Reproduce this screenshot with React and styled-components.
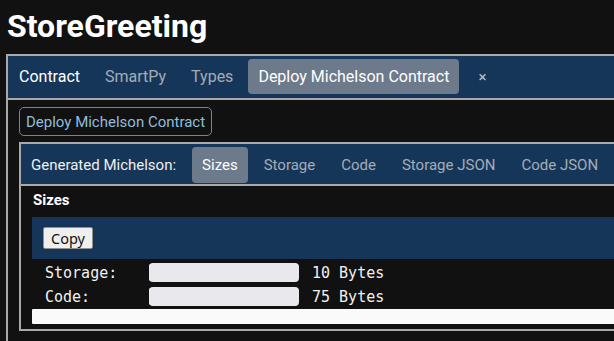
import React from 'react';
import styled, { createGlobalStyle } from 'styled-components';

const GlobalStyle = createGlobalStyle`
  html, body {
    margin: 0;
    background: #111111;
    overflow: hidden;
  }
  body {
    font-family: Roboto, "Liberation Sans", sans-serif;
    color: #ffffff;
  }
`;

const Page = styled.div`
  padding: 6px 0 0 6px;
`;

const Title = styled.h1`
  margin: 0 0 8px 1px;
  font-size: 32px;
  font-weight: 700;
  line-height: 40px;
`;

const Panel = styled.div`
  width: 640px;
  border: 2px solid #a9a9a9;
  border-bottom: none;
  min-height: 300px;
`;

const TabBar = styled.div`
  display: flex;
  align-items: center;
  gap: ${props => props.gap || 4}px;
  background: #163659;
  padding: ${props => props.pad || '3px 0 3px 1px'};
  border-bottom: 2px solid #a9a9a9;
`;

const Label = styled.span`
  flex-shrink: 0;
  font-size: 15px;
  padding: 0 10px 0 10px;
  color: #f0f0f0;
`;

const Tab = styled.div`
  flex-shrink: 0;
  white-space: nowrap;
  padding: 0 10px;
  height: ${props => props.h || 35}px;
  display: flex;
  align-items: center;
  font-size: ${props => props.size || 16}px;
  border-radius: 4px;
  color: ${props => (props.active || props.first ? '#ffffff' : '#a3adb8')};
  background: ${props => (props.active ? '#6d7a8b' : 'transparent')};
`;

const Close = styled.span`
  color: #b8c0ca;
  font-size: 15px;
  padding-left: 14px;
`;

const Body = styled.div`
  padding: 7px 0 0 11px;
`;

const OutlineButton = styled.button`
  font-family: inherit;
  font-size: 15px;
  color: #90bddc;
  background: transparent;
  border: 1.5px solid #5b8db3;
  border-radius: 5px;
  height: 29px;
  padding: 0 6px;
  margin-bottom: 6px;
`;

const Inner = styled.div`
  border: 2px solid #a9a9a9;
  border-right: none;
`;

const Content = styled.div`
  padding: 6px 0 5px 11px;
`;

const SubTitle = styled.div`
  font-weight: 700;
  font-size: 15px;
  margin: 0 0 9px 1px;
  line-height: 16px;
`;

const Band = styled.div`
  background: #163659;
  height: 42px;
  display: flex;
  align-items: center;
  padding-left: 11px;
`;

const CopyButton = styled.button`
  font-family: "Noto Sans", "DejaVu Sans", sans-serif;
  font-size: 14.5px;
  color: #111;
  background: #efefef;
  border: 1px solid #8f8f8f;
  border-radius: 2px;
  height: 22px;
  padding: 0 7px;
  line-height: 1;
`;

const SizeGrid = styled.div`
  display: grid;
  grid-template-columns: 104px 163px auto;
  row-gap: 5px;
  align-items: center;
  padding: 4px 0 3px 13px;
  font-family: "DejaVu Sans Mono", monospace;
  font-size: 15px;
  color: #f2f2f2;
`;

const Bar = styled.div`
  width: 150px;
  height: 19px;
  border-radius: 4px;
  background: #e9e9ed;
  overflow: hidden;
`;

const Fill = styled.div`
  height: 100%;
  background: #e9e9ed;
`;

const WhiteBar = styled.div`
  height: 15px;
  background: #fafafa;
  border-radius: 1px;
`;

const mainTabs = ['Contract', 'SmartPy', 'Types', 'Deploy Michelson Contract'];
const subTabs = ['Sizes', 'Storage', 'Code', 'Storage JSON', 'Code JSON'];
const sizes = [
  { name: 'Storage:', bytes: 10 },
  { name: 'Code:', bytes: 75 }
];

export default function App() {
  return (
    <>
      <GlobalStyle />
      <Page>
        <Title>StoreGreeting</Title>
        <Panel>
          <TabBar gap={5} pad="3px 0 4px 1px">
            {mainTabs.map((t, i) => (
              <Tab key={t} first={i === 0} active={i === 3}>
                {t}
              </Tab>
            ))}
            <Close>×</Close>
          </TabBar>
          <Body>
            <OutlineButton>Deploy Michelson Contract</OutlineButton>
            <Inner>
              <TabBar gap={6} pad="3px 0 1px 0">
                <Label>Generated Michelson:</Label>
                {subTabs.map((t, i) => (
                  <Tab key={t} active={i === 0} size={15} h={36}>
                    {t}
                  </Tab>
                ))}
              </TabBar>
              <Content>
                <SubTitle>Sizes</SubTitle>
                <Band>
                  <CopyButton>Copy</CopyButton>
                </Band>
                <SizeGrid>
                  {sizes.map(s => (
                    <React.Fragment key={s.name}>
                      <span>{s.name}</span>
                      <Bar>
                        <Fill style={{ width: `${s.bytes / 100}%` }} />
                      </Bar>
                      <span>{s.bytes} Bytes</span>
                    </React.Fragment>
                  ))}
                </SizeGrid>
                <WhiteBar />
              </Content>
            </Inner>
          </Body>
        </Panel>
      </Page>
    </>
  );
}
